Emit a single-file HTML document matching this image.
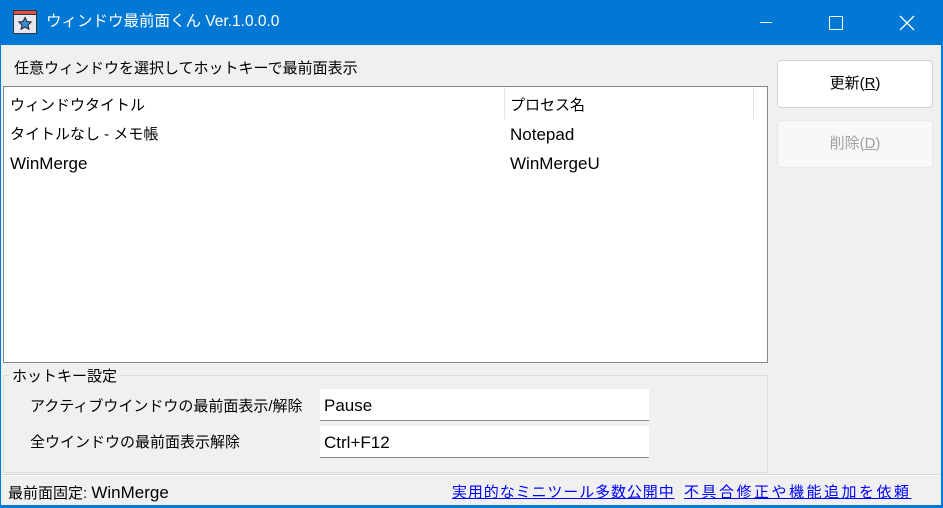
<!DOCTYPE html>
<html><head><meta charset="utf-8"><style>
*{margin:0;padding:0;box-sizing:border-box}
body{width:943px;height:508px;overflow:hidden;background:#0078d4;font-family:"Liberation Sans","Noto Sans CJK JP",sans-serif;font-size:15px;line-height:20px;color:#000;position:relative}
.abs{position:absolute;white-space:nowrap}
.l{font-size:17px}
.client{position:absolute;left:1px;top:45px;width:940px;height:460px;background:#f0f0f0}
.title{left:46px;top:12px;color:#fff;font-size:15.5px}
.list{left:3px;top:86px;width:765px;height:277px;background:#fff;border:1px solid #828790}
.btn{position:absolute;left:777px;width:156px;height:48px;border:1px solid #d0d0d0;border-radius:4px;background:#fff;text-align:center;line-height:46px}
.edit{position:absolute;left:320px;width:329px;height:32px;background:#fff;border-bottom:1px solid #8a8a8a;padding-left:4px;line-height:34px;font-size:17px}
a{color:#0000ff;text-decoration:underline}
</style></head><body>
<div class="client"></div>
<svg class="abs" style="left:13px;top:10px" width="24" height="24" viewBox="0 0 24 24">
<rect x="0.5" y="0.5" width="23" height="23" fill="#e6e6f0" stroke="#333"/>
<rect x="1" y="1" width="22" height="3" fill="#e05050"/>
<line x1="0" y1="4.5" x2="24" y2="4.5" stroke="#333"/>
<path d="M12 7.5l1.9 4 4.3.5-3.2 3 .9 4.3L12 17.1 8.1 19.3l.9-4.3-3.2-3 4.3-.5z" fill="#3b8ed8" stroke="#222" stroke-width="1"/>
</svg>
<div class="abs title">ウィンドウ最前面くん Ver.1.0.0.0</div>
<div class="abs" style="left:760px;top:22px;width:12px;height:1px;background:#fff"></div>
<div class="abs" style="left:829px;top:16px;width:14px;height:14px;border:1.5px solid #fff;border-radius:1px"></div>
<svg class="abs" style="left:899px;top:15px" width="16" height="16"><path d="M1 1L15 15M15 1L1 15" stroke="#fff" stroke-width="1.3"/></svg>

<div class="abs" style="left:14px;top:59px">任意ウィンドウを選択してホットキーで最前面表示</div>
<div class="abs list">
 <div class="abs" style="left:6px;top:9px">ウィンドウタイトル</div>
 <div class="abs" style="left:500px;top:0;width:1px;height:32px;background:#e5e5e5"></div>
 <div class="abs" style="left:506px;top:9px">プロセス名</div>
 <div class="abs" style="left:749px;top:0;width:1px;height:32px;background:#e5e5e5"></div>
 <div class="abs" style="left:6px;top:38px">タイトルなし - メモ帳</div>
 <div class="abs l" style="left:506px;top:38px">Notepad</div>
 <div class="abs l" style="left:6px;top:67px">WinMerge</div>
 <div class="abs l" style="left:506px;top:67px">WinMergeU</div>
</div>
<div class="btn" style="top:60px">更新(<u>R</u>)</div>
<div class="btn" style="top:120px;background:#f8f8f8;border-color:#e8e8e8;color:#a0a0a0">削除(<u>D</u>)</div>

<div class="abs" style="left:3px;top:375px;width:765px;height:98px;border:1px solid #dcdcdc"></div>
<div class="abs" style="left:9px;top:367px;background:#f0f0f0;padding:0 3px">ホットキー設定</div>
<div class="abs" style="left:30px;top:397px">アクティブウインドウの最前面表示/解除</div>
<div class="edit" style="top:389px">Pause</div>
<div class="abs" style="left:30px;top:433px">全ウインドウの最前面表示解除</div>
<div class="edit" style="top:426px">Ctrl+F12</div>

<div class="abs" style="left:1px;top:474px;width:940px;height:1px;background:#d8d8d8"></div>
<div class="abs" style="left:1px;top:475px;width:940px;height:1px;background:#fff"></div>
<div class="abs" style="left:8px;top:483px">最前面固定: <span class="l">WinMerge</span></div>
<div class="abs" style="left:452px;top:483px;letter-spacing:0.9px"><a>実用的なミニツール多数公開中</a></div>
<div class="abs" style="left:684px;top:483px;letter-spacing:2.5px"><a>不具合修正や機能追加を依頼</a></div>
</body></html>
